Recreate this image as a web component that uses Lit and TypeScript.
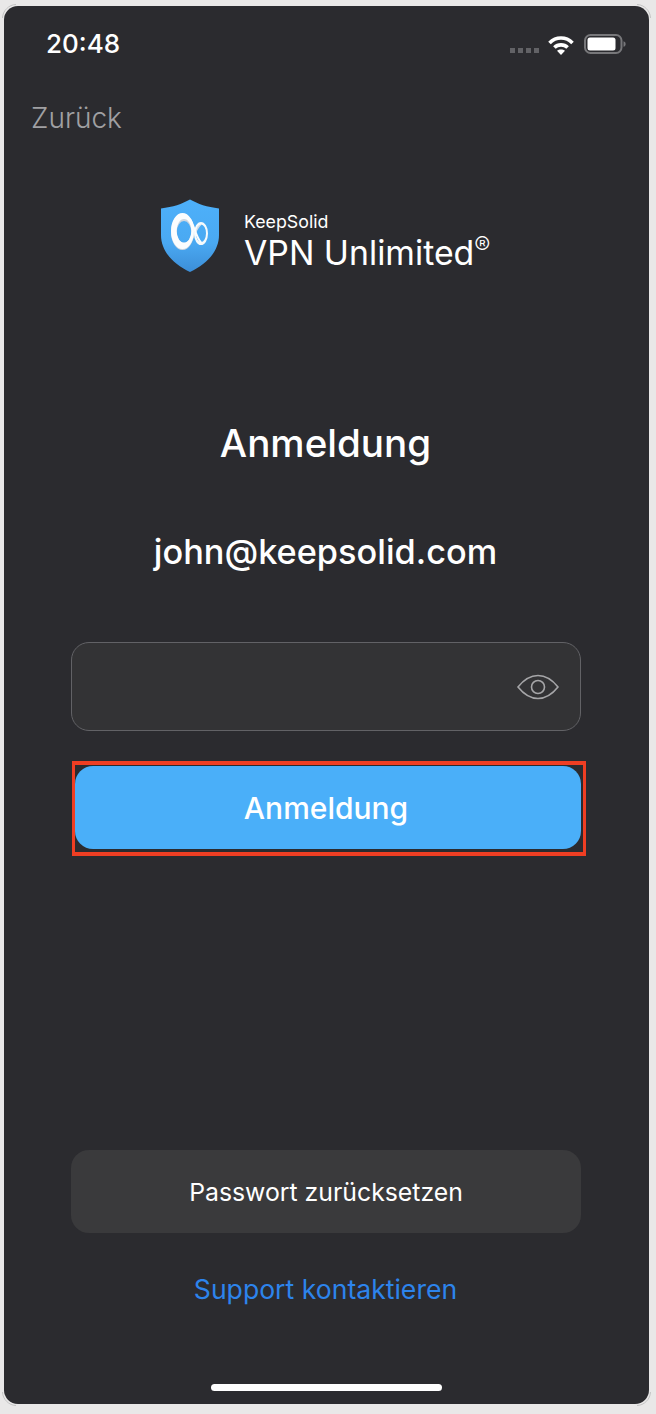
import { LitElement, html, css } from "lit";
import { customElement } from "lit/decorators.js";

@customElement("app-root")
export class AppRoot extends LitElement {
  static styles = css`
    :host { display: block; width: 656px; height: 1414px; background: #e9e8e8; font-family: Inter, "Liberation Sans", sans-serif; overflow: hidden; position: relative; }
    .screen { box-sizing: border-box; margin: 6px 0 0 4px; width: 645px; height: 1398px; background: #2b2b2f; border-radius: 14px; display: flex; flex-direction: column; align-items: stretch; position: relative; }
    .corners { position: absolute; left: -2px; top: -2px; }
    .status { display: flex; align-items: center; height: 24px; margin-top: 26px; padding: 0 23px 0 42px; }
    .time { color: #fff; font-size: 26px; font-weight: 500; line-height: 24px; flex: 1; }
    .status svg { display: block; }
    .dots { display: flex; gap: 3px; margin: 13px 9px 0 0; }
    .dots i { width: 5px; height: 5px; background: #626266; display: block; }
    .wifi { margin-right: 10px; margin-top: 2px; }
    .back { color: #a0a0a3; font-size: 28px; font-weight: 300; line-height: 34px; margin: 45px 0 0 27px; }
    .logo { display: flex; align-items: center; margin: 64px 0 0 156px; height: 74px; }
    .brand { margin-left: 24px; color: #fff; display: flex; flex-direction: column; padding-top: 12px; }
    .brand .k { font-size: 17.8px; line-height: 20px; font-weight: 400; }
    .brand .v { font-size: 33.8px; line-height: 38px; font-weight: 400; margin-top: 2px; }
    .brand sup { font-size: 24px; line-height: 0; vertical-align: 11px; margin-left: 0; font-weight: 300; }
    h1 { margin: 147px 2px 0 0; text-align: center; color: #fff; font-size: 38.6px; font-weight: 500; line-height: 46px; }
    .email { margin: 65px 2px 0 0; text-align: center; color: #fff; font-size: 34.3px; font-weight: 500; line-height: 42px; }
    .input { box-sizing: border-box; margin: 69px 0 0 67px; width: 510px; height: 89px; border: 1px solid #626266; border-radius: 18px; background: #333335; display: flex; align-items: center; justify-content: flex-end; padding-right: 21px; }
    .hl { box-sizing: border-box; margin: 30px 0 0 68px; width: 514px; height: 95px; border: 3px solid #ef3e23; border-width: 4px 3px 4px 3px; padding: 1px 2px 3px 0; }
    .primary { box-sizing: border-box; height: 83px; width: 506px; padding-right: 4px; background: #4aaff9; border-radius: 18px; color: #fff; font-size: 30px; font-weight: 500; display: flex; align-items: center; justify-content: center; }
    .reset { margin: 294px 0 0 67px; width: 510px; height: 83px; border-radius: 18px; background: #3a3a3c; color: #fff; font-size: 24.8px; font-weight: 400; display: flex; align-items: center; justify-content: center; }
    .support { margin: 37px 2px 0 0; text-align: center; color: #2d84ec; font-size: 26.6px; font-weight: 400; line-height: 38px; }
    .home { margin: 76px 0 0 207px; width: 231px; height: 7px; border-radius: 4px; background: #fff; }
  `;

  render() {
    return html`
      <div class="screen">
        <svg class="corners" width="649" height="1402" viewBox="0 0 649 1402" fill="none" stroke="#c4c4c4" stroke-width="1">
          <path d="M0.5 14C0.5 7 7 0.5 14 0.5" />
          <path d="M635 0.5C642 0.5 648.5 7 648.5 14" />
          <path d="M0.5 1388C0.5 1395 7 1401.5 14 1401.5" />
          <path d="M635 1401.5C642 1401.5 648.5 1395 648.5 1388" />
        </svg>
        <div class="status">
          <span class="time">20:48</span>
          <div class="dots"><i></i><i></i><i></i><i></i></div>
          <svg class="wifi" width="26" height="20" viewBox="0 0 26 20" fill="none" stroke="#fff" stroke-width="3.6">
            <path d="M1.5 8C8 1.4 18 1.4 24.5 8" />
            <path d="M6.4 12.6C10 9 16 9 19.6 12.6" />
            <path d="M13 20 9 15.8C11.2 14 14.8 14 17 15.8Z" fill="#fff" stroke="none" />
          </svg>
          <svg width="42" height="20" viewBox="0 0 42 20">
            <rect x="1" y="1" width="36.5" height="18" rx="5.5" fill="none" stroke="#77777a" stroke-width="2" />
            <rect x="3.5" y="3.5" width="28" height="13" rx="2.5" fill="#fff" />
            <path d="M39.5 7.2C41 7.6 41.6 8.6 41.6 10S41 12.4 39.5 12.8Z" fill="#77777a" />
          </svg>
        </div>
        <div class="back">Zurück</div>
        <div class="logo">
          <svg width="60" height="74" viewBox="0 0 60 74">
            <defs>
              <linearGradient id="sh" x1="0" y1="0" x2="0" y2="1">
                <stop offset="0" stop-color="#4db0fa" /><stop offset="0.6" stop-color="#4aa9f2" /><stop offset="1" stop-color="#3c8ed8" />
              </linearGradient>
            </defs>
            <path d="M30 0.5C38 5 47 8 59 9.5V36C59 52 47 65 30 73C13 65 1 52 1 36V9.5C13 8 22 5 30 0.5Z" fill="url(#sh)" />
            <path d="M30 44C33 39 36 29 41 25" fill="none" stroke="#d4dde6" stroke-width="1.800" />
            <path fill-rule="evenodd" fill="#f6fafc" d="M41 23A7 11.500 0 1 1 41 46A7 11.500 0 1 1 41 23ZM41 25.500A5 8.800 0 1 0 41 43.100A5 8.800 0 1 0 41 25.500Z" />
            <path fill-rule="evenodd" fill="#ccd6e0" d="M22.500 15A11.500 18 0 1 1 22.500 51A11.500 18 0 1 1 22.500 15ZM24 22A7.200 11 0 1 0 24 44A7.200 11 0 1 0 24 22Z" />
            <path fill-rule="evenodd" fill="#fbfdfe" d="M22.500 14A11.500 18 0 1 1 22.500 50A11.500 18 0 1 1 22.500 14ZM24 20A7.400 11.800 0 1 0 24 43.600A7.400 11.800 0 1 0 24 20Z" />
            <path d="M30 20C34 26 36 38 41 43.500" fill="none" stroke="#fbfdfe" stroke-width="2" />
          </svg>
          <div class="brand">
            <span class="k">KeepSolid</span>
            <span class="v">VPN Unlimited<sup>®</sup></span>
          </div>
        </div>
        <h1>Anmeldung</h1>
        <div class="email">john@keepsolid.com</div>
        <div class="input">
          <svg width="42" height="26" viewBox="0 0 42 26" fill="none" stroke="#a6a6a8" stroke-width="1.6">
            <path d="M1 13C7 5.500 13.500 1.500 21 1.500S35 5.500 41 13C35 20.500 28.500 24.500 21 24.500S7 20.500 1 13Z" />
            <circle cx="21" cy="13" r="6.500" />
          </svg>
        </div>
        <div class="hl"><div class="primary">Anmeldung</div></div>
        <div class="reset">Passwort zurücksetzen</div>
        <div class="support">Support kontaktieren</div>
        <div class="home"></div>
      </div>
    `;
  }
}
